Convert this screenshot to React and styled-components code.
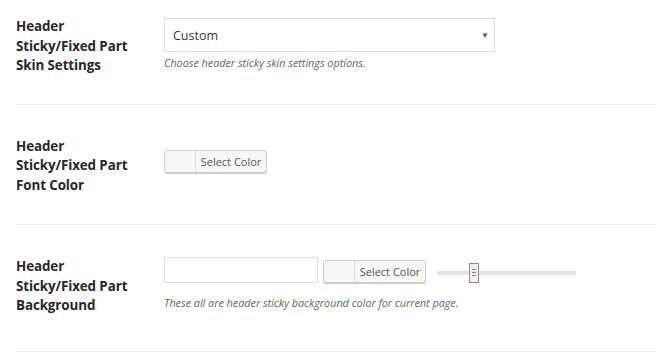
import React from "react";
import styled, { createGlobalStyle } from "styled-components";

const Global = createGlobalStyle`
  html, body { margin: 0; padding: 0; background: #fff; }
  body { font-family: "Open Sans", "Noto Sans", sans-serif; color: #23282d; }
`;

const Page = styled.div`
  width: 657px;
  height: 352px;
  overflow: hidden;
  padding-left: 16px;
  box-sizing: border-box;
`;

const Row = styled.div`
  display: grid;
  grid-template-columns: 148px 1fr;
  padding: ${(p) => p.$top}px 0 ${(p) => p.$bottom}px;
  border-bottom: 1px solid #eeeeee;
`;

const Label = styled.div`
  font-size: 13.4px;
  font-weight: 700;
  line-height: 19.5px;
  padding-top: 1px;
  color: #23282d;
  letter-spacing: -0.1px;
`;

const Field = styled.div`
  display: flex;
  flex-direction: column;
  padding-top: ${(p) => p.$offset || 0}px;
`;

const Controls = styled.div`
  display: flex;
  align-items: center;
`;

const Select = styled.div`
  width: 331px;
  height: 34px;
  box-sizing: border-box;
  border: 1px solid #dddddd;
  background: #fff;
  display: flex;
  align-items: center;
  justify-content: space-between;
  padding: 1px 5px 0 8px;
  font-size: 12.5px;
  color: #32373c;
`;

const Arrow = styled.span`
  font-size: 8px;
  color: #555;
  margin-top: -3px;
`;

const Desc = styled.div`
  font-size: 10.9px;
  font-style: italic;
  color: #666;
  margin-top: ${(p) => p.$mt}px;
  letter-spacing: -0.05px;
`;

const ColorButton = styled.div`
  display: flex;
  align-items: stretch;
  height: 23px;
  width: 103px;
  box-sizing: border-box;
  border: 1px solid #cccccc;
  border-radius: 3px;
  background: #f7f7f7;
  box-shadow: 0 1px 0 #cccccc;
  margin-left: ${(p) => p.$ml || 0}px;
  margin-top: ${(p) => p.$mt || 0}px;
  overflow: hidden;
`;

const Swatch = styled.span`
  width: 30px;
  border-right: 1px solid #dddddd;
  background: #f7f7f7;
`;

const ButtonText = styled.span`
  flex: 1;
  display: flex;
  align-items: center;
  justify-content: center;
  font-size: 11px;
  color: #555;
`;

const TextInput = styled.div`
  width: 154px;
  height: 26px;
  box-sizing: border-box;
  border: 1px solid #dddddd;
  background: #fff;
`;

const Slider = styled.div`
  position: relative;
  width: 139px;
  height: 4px;
  background: #e5e1dc;
  margin-left: 11px;
  margin-top: 5px;
`;

const Handle = styled.div`
  position: absolute;
  left: 32px;
  top: -8px;
  width: 10px;
  height: 20px;
  box-sizing: border-box;
  border: 1px solid #8d8882;
  background: #f2efeb;
  display: flex;
  flex-direction: column;
  align-items: center;
  justify-content: center;
  gap: 2px;
  span {
    display: block;
    width: 4px;
    height: 1px;
    background: #8d8882;
  }
`;

export default function App() {
  return (
    <>
      <Global />
      <Page>
        <Row $top={16} $bottom={28}>
          <Label>
            Header
            <br />
            Sticky/Fixed Part
            <br />
            Skin Settings
          </Label>
          <Field $offset={2}>
            <Select>
              <span>Custom</span>
              <Arrow>▼</Arrow>
            </Select>
            <Desc $mt={3}>Choose header sticky skin settings options.</Desc>
          </Field>
        </Row>
        <Row $top={31} $bottom={29}>
          <Label>
            Header
            <br />
            Sticky/Fixed Part
            <br />
            Font Color
          </Label>
          <Field $offset={14}>
            <Controls>
              <ColorButton>
                <Swatch />
                <ButtonText>Select Color</ButtonText>
              </ColorButton>
            </Controls>
          </Field>
        </Row>
        <Row $top={31} $bottom={35}>
          <Label>
            Header
            <br />
            Sticky/Fixed Part
            <br />
            Background
          </Label>
          <Field $offset={1}>
            <Controls>
              <TextInput />
              <ColorButton $ml={5} $mt={3}>
                <Swatch />
                <ButtonText>Select Color</ButtonText>
              </ColorButton>
              <Slider>
                <Handle>
                  <span />
                  <span />
                  <span />
                </Handle>
              </Slider>
            </Controls>
            <Desc $mt={12}>
              These all are header sticky background color for current page.
            </Desc>
          </Field>
        </Row>
      </Page>
    </>
  );
}
